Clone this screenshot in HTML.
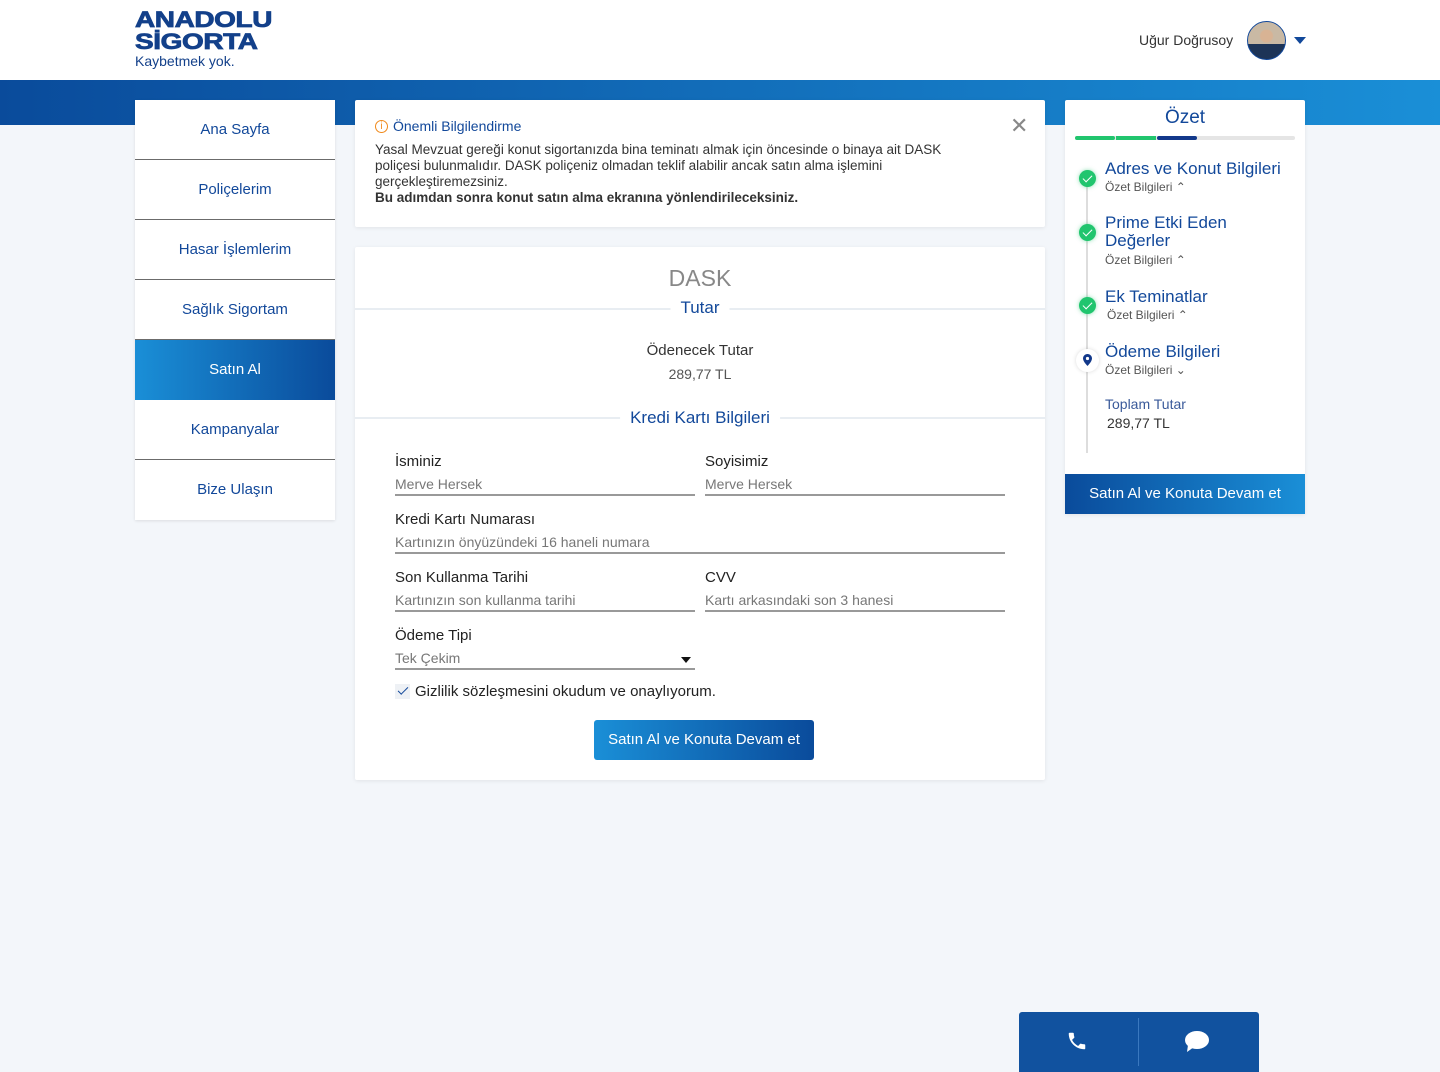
<!DOCTYPE html>
<html><head><meta charset="utf-8">
<style>
*{margin:0;padding:0;box-sizing:border-box}
body{width:1440px;height:1072px;background:#f3f6fa;font-family:"Liberation Sans",sans-serif;position:relative;overflow:hidden;color:#222}
.a{position:absolute}
.hdr{left:0;top:0;width:1440px;height:80px;background:#fff}
.band{left:0;top:80px;width:1440px;height:45px;background:linear-gradient(90deg,#0a4b9b,#1a8fd7)}
.menu{left:135px;top:100px;width:200px;height:420px;background:#fff;box-shadow:0 1px 3px rgba(0,0,0,.1)}
.menu div{height:60px;border-bottom:1px solid #6b6b6b;text-align:center;line-height:60px;color:#12489a;font-size:15px}
.menu div:last-child{border:none}
.menu .act{background:linear-gradient(90deg,#1a8fd7,#0a4b9b);color:#fff;border:none}
.card{background:#fff;box-shadow:0 1px 4px rgba(0,0,0,.08);border-radius:2px}
.lbl{font-size:15px;color:#222}
.inp{font-size:14px;color:#777;border-bottom:2px solid #999;height:20px}
.sec{left:355px;width:690px;height:2px;background:#e8edf2}
.sect{background:#fff;color:#12489a;font-size:17px;padding:0 10px;transform:translateX(-50%)}
.st{color:#12489a;font-size:17px;left:1105px}
.ss{color:#555;font-size:12px;left:1105px}
.dot{left:1079px;width:17px;height:17px;border-radius:50%;background:#21c56e;box-shadow:0 0 4px rgba(33,197,110,.5)}
.ck{left:1083px;width:9px;height:5px;border-left:1.5px solid #fff;border-bottom:1.5px solid #fff;transform:rotate(-45deg)}
</style></head><body>
<div class="a hdr"></div>
<div class="a" style="left:135px;top:9px;color:#13408a;font-weight:900;font-size:22px;line-height:22px;letter-spacing:-0.3px;-webkit-text-stroke:0.8px #13408a;transform:scaleX(1.27);transform-origin:left">ANADOLU<br>SİGORTA</div>
<div class="a" style="left:135px;top:53px;color:#13408a;font-size:14px">Kaybetmek yok.</div>
<div class="a" style="left:1139px;top:32px;font-size:14px;color:#333">Uğur Doğrusoy</div>
<div class="a" style="left:1247px;top:21px;width:39px;height:39px;border-radius:50%;border:1px solid #12489a;background:radial-gradient(circle at 50% 38%,#d8b394 0 6px,transparent 7px),linear-gradient(180deg,#c9b9a4 0 60%,#1d3457 60%)"></div>
<div class="a" style="left:1294px;top:37px;border-left:6px solid transparent;border-right:6px solid transparent;border-top:7px solid #12489a"></div>
<div class="a band"></div>

<div class="a menu">
<div>Ana Sayfa</div><div>Poliçelerim</div><div>Hasar İşlemlerim</div><div>Sağlık Sigortam</div><div class="act">Satın Al</div><div>Kampanyalar</div><div>Bize Ulaşın</div>
</div>

<div class="a card" style="left:355px;top:100px;width:690px;height:127px"></div>
<div class="a" style="left:375px;top:120px;width:13px;height:13px;border:1px solid #f08a1c;border-radius:50%;color:#f08a1c;font-size:10px;text-align:center;line-height:11px">i</div>
<div class="a" style="left:393px;top:118px;color:#12489a;font-size:14px">Önemli Bilgilendirme</div>
<div class="a" style="left:1010px;top:113px;color:#888;font-size:22px;font-weight:300">✕</div>
<div class="a" style="left:375px;top:142px;width:605px;font-size:13.5px;line-height:16px;color:#333">Yasal Mevzuat gereği konut sigortanızda bina teminatı almak için öncesinde o binaya ait DASK poliçesi bulunmalıdır. DASK poliçeniz olmadan teklif alabilir ancak satın alma işlemini gerçekleştiremezsiniz.<br><b>Bu adımdan sonra konut satın alma ekranına yönlendirileceksiniz.</b></div>

<div class="a card" style="left:355px;top:247px;width:690px;height:533px"></div>
<div class="a" style="left:355px;width:690px;top:265px;text-align:center;color:#888;font-size:23px">DASK</div>
<div class="a sec" style="top:308px"></div>
<div class="a sect" style="left:700px;top:298px">Tutar</div>
<div class="a" style="left:355px;width:690px;top:342px;text-align:center;font-size:15px;color:#333">Ödenecek Tutar</div>
<div class="a" style="left:355px;width:690px;top:366px;text-align:center;font-size:14px;color:#555">289,77 TL</div>
<div class="a sec" style="top:417px"></div>
<div class="a sect" style="left:700px;top:408px">Kredi Kartı Bilgileri</div>

<div class="a lbl" style="left:395px;top:453px">İsminiz</div>
<div class="a inp" style="left:395px;top:476px;width:300px">Merve Hersek</div>
<div class="a lbl" style="left:705px;top:453px">Soyisimiz</div>
<div class="a inp" style="left:705px;top:476px;width:300px">Merve Hersek</div>
<div class="a lbl" style="left:395px;top:511px">Kredi Kartı Numarası</div>
<div class="a inp" style="left:395px;top:534px;width:610px">Kartınızın önyüzündeki 16 haneli numara</div>
<div class="a lbl" style="left:395px;top:569px">Son Kullanma Tarihi</div>
<div class="a inp" style="left:395px;top:592px;width:300px">Kartınızın son kullanma tarihi</div>
<div class="a lbl" style="left:705px;top:569px">CVV</div>
<div class="a inp" style="left:705px;top:592px;width:300px">Kartı arkasındaki son 3 hanesi</div>
<div class="a lbl" style="left:395px;top:627px">Ödeme Tipi</div>
<div class="a inp" style="left:395px;top:650px;width:300px">Tek Çekim</div>
<div class="a" style="left:681px;top:657px;border-left:5px solid transparent;border-right:5px solid transparent;border-top:6px solid #111"></div>
<div class="a" style="left:395px;top:684px;width:15px;height:15px;background:#eef1f5"></div>
<div class="a" style="left:398px;top:687px;width:10px;height:5px;border-left:1.5px solid #12489a;border-bottom:1.5px solid #12489a;transform:rotate(-45deg)"></div>
<div class="a" style="left:415px;top:683px;font-size:15px;color:#222">Gizlilik sözleşmesini okudum ve onaylıyorum.</div>
<div class="a" style="left:594px;top:720px;width:220px;height:40px;border-radius:3px;background:linear-gradient(90deg,#1a8fd7,#0a4b9b);color:#fff;font-size:15px;text-align:center;line-height:40px">Satın Al ve Konuta Devam et</div>

<div class="a card" style="left:1065px;top:100px;width:240px;height:414px"></div>
<div class="a" style="left:1065px;width:240px;top:107px;text-align:center;color:#12489a;font-size:19px">Özet</div>
<div class="a" style="left:1075px;top:136px;width:220px;height:4px;border-radius:2px;background:#e5e5e5"></div>
<div class="a" style="left:1075px;top:136px;width:40px;height:4px;border-radius:2px;background:#21c56e"></div>
<div class="a" style="left:1116px;top:136px;width:40px;height:4px;background:#21c56e"></div>
<div class="a" style="left:1157px;top:136px;width:40px;height:4px;border-radius:2px;background:#12388a"></div>
<div class="a" style="left:1086px;top:175px;width:2px;height:278px;background:#ddd"></div>
<div class="a dot" style="top:170px"></div><div class="a ck" style="top:175px"></div>
<div class="a dot" style="top:224px"></div><div class="a ck" style="top:229px"></div>
<div class="a dot" style="top:297px"></div><div class="a ck" style="top:302px"></div>
<div class="a" style="left:1076px;top:349px;width:23px;height:23px;border-radius:50%;background:#fff;box-shadow:0 0 4px rgba(0,0,0,.15)"></div>
<svg class="a" style="left:1083px;top:354px" width="9" height="12" viewBox="0 0 9 12"><path d="M4.5 0C2 0 0 2 0 4.5 0 7.5 4.5 12 4.5 12S9 7.5 9 4.5C9 2 7 0 4.5 0z" fill="#12388a"/><circle cx="4.5" cy="4.5" r="1.6" fill="#fff"/></svg>
<div class="a st" style="top:159px">Adres ve Konut Bilgileri</div>
<div class="a ss" style="top:180px">Özet Bilgileri ⌃</div>
<div class="a st" style="top:214px;line-height:18px">Prime Etki Eden<br>Değerler</div>
<div class="a ss" style="top:253px">Özet Bilgileri ⌃</div>
<div class="a st" style="top:287px">Ek Teminatlar</div>
<div class="a ss" style="top:308px;left:1107px">Özet Bilgileri ⌃</div>
<div class="a st" style="top:342px">Ödeme Bilgileri</div>
<div class="a ss" style="top:363px">Özet Bilgileri ⌄</div>
<div class="a" style="left:1105px;top:396px;color:#3a5a9a;font-size:14px">Toplam Tutar</div>
<div class="a" style="left:1107px;top:415px;color:#333;font-size:14px">289,77 TL</div>
<div class="a" style="left:1065px;top:474px;width:240px;height:40px;background:linear-gradient(90deg,#0a4b9b,#1a8fd7);color:#fff;font-size:15px;text-align:center;line-height:40px">Satın Al ve Konuta Devam et</div>

<div class="a" style="left:1019px;top:1012px;width:240px;height:60px;background:#11529f;border-radius:3px 3px 0 0"></div>
<div class="a" style="left:1138px;top:1018px;width:1px;height:48px;background:#3a78bf"></div>
<svg class="a" style="left:1066px;top:1030px" width="22" height="22" viewBox="0 0 24 24"><path d="M6.6 10.8c1.4 2.8 3.8 5.1 6.6 6.6l2.2-2.2c.3-.3.7-.4 1-.2 1.1.4 2.3.6 3.6.6.6 0 1 .4 1 1V20c0 .6-.4 1-1 1C10.6 21 3 13.4 3 4c0-.6.4-1 1-1h3.5c.6 0 1 .4 1 1 0 1.3.2 2.5.6 3.6.1.3 0 .7-.2 1z" fill="#fff"/></svg>
<svg class="a" style="left:1184px;top:1030px" width="26" height="24" viewBox="0 0 26 24"><ellipse cx="13" cy="10" rx="12" ry="9" fill="#fff"/><path d="M4 15 L3 22 L10 17z" fill="#fff"/></svg>
</body></html>
